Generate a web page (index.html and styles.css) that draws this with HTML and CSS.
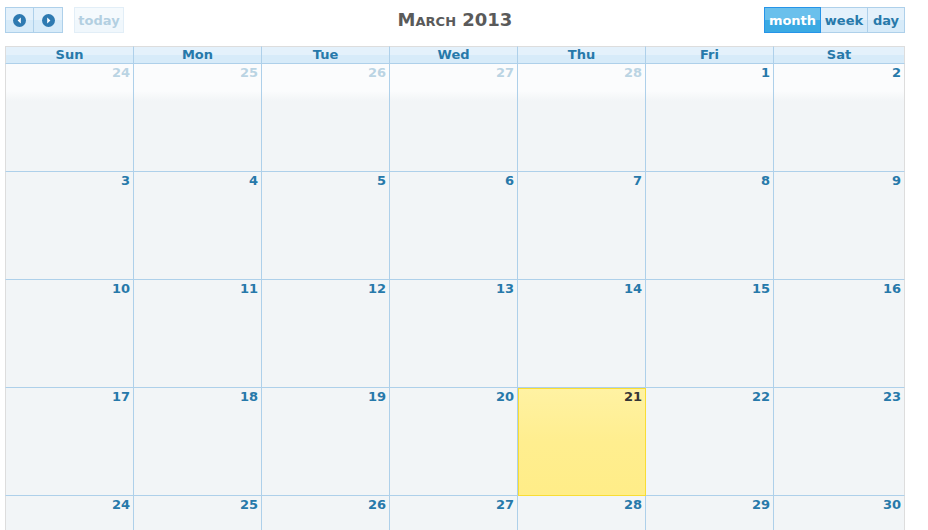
FILE: index.html
```html
<!DOCTYPE html>
<html>
<head>
<meta charset="utf-8">
<link rel="stylesheet" href="styles.css">
</head>
<body>
<div class="cal">
  <div class="toolbar">
    <div class="left">
      <div class="group">
        <span class="btn icon-btn first"><svg width="13" height="13" viewBox="0 0 13 13"><circle cx="6.5" cy="6.5" r="6.5" fill="#2e7ab1"/><path d="M7.8 3.6 L4.6 6.5 L7.8 9.4 Z" fill="#fff"/></svg></span><span class="btn icon-btn last"><svg width="13" height="13" viewBox="0 0 13 13"><circle cx="6.5" cy="6.5" r="6.5" fill="#2e7ab1"/><path d="M5.2 3.6 L8.4 6.5 L5.2 9.4 Z" fill="#fff"/></svg></span>
      </div>
      <span class="btn disabled">today</span>
    </div>
    <h2 class="title">March 2013</h2>
    <div class="right">
      <div class="group">
        <span class="btn active first">month</span><span class="btn">week</span><span class="btn last">day</span>
      </div>
    </div>
  </div>
  <div class="head">
    <div class="th">Sun</div><div class="th">Mon</div><div class="th">Tue</div><div class="th">Wed</div><div class="th">Thu</div><div class="th">Fri</div><div class="th">Sat</div>
  </div>
  <div class="body">
    <div class="cell other"><span class="num">24</span></div>
    <div class="cell other"><span class="num">25</span></div>
    <div class="cell other"><span class="num">26</span></div>
    <div class="cell other"><span class="num">27</span></div>
    <div class="cell other"><span class="num">28</span></div>
    <div class="cell"><span class="num">1</span></div>
    <div class="cell"><span class="num">2</span></div>

    <div class="cell"><span class="num">3</span></div>
    <div class="cell"><span class="num">4</span></div>
    <div class="cell"><span class="num">5</span></div>
    <div class="cell"><span class="num">6</span></div>
    <div class="cell"><span class="num">7</span></div>
    <div class="cell"><span class="num">8</span></div>
    <div class="cell"><span class="num">9</span></div>

    <div class="cell"><span class="num">10</span></div>
    <div class="cell"><span class="num">11</span></div>
    <div class="cell"><span class="num">12</span></div>
    <div class="cell"><span class="num">13</span></div>
    <div class="cell"><span class="num">14</span></div>
    <div class="cell"><span class="num">15</span></div>
    <div class="cell"><span class="num">16</span></div>

    <div class="cell"><span class="num">17</span></div>
    <div class="cell"><span class="num">18</span></div>
    <div class="cell"><span class="num">19</span></div>
    <div class="cell"><span class="num">20</span></div>
    <div class="cell today"><span class="num">21</span></div>
    <div class="cell"><span class="num">22</span></div>
    <div class="cell"><span class="num">23</span></div>

    <div class="cell"><span class="num">24</span></div>
    <div class="cell"><span class="num">25</span></div>
    <div class="cell"><span class="num">26</span></div>
    <div class="cell"><span class="num">27</span></div>
    <div class="cell"><span class="num">28</span></div>
    <div class="cell"><span class="num">29</span></div>
    <div class="cell"><span class="num">30</span></div>
  </div>
</div>
</body>
</html>
```
FILE: styles.css
```css
html, body {
  margin: 0;
  padding: 0;
  background: #ffffff;
}
body {
  font-family: "DejaVu Sans", "Liberation Sans", sans-serif;
  font-size: 13px;
}
.cal {
  width: 900px;
  padding: 7px 0 0 5px;
}
.toolbar {
  display: flex;
  align-items: flex-start;
  justify-content: space-between;
  height: 39px;
}
.left, .right {
  display: flex;
  gap: 11px;
  width: 200px;
}
.right {
  justify-content: flex-end;
}
.group {
  display: flex;
}
.btn {
  box-sizing: border-box;
  height: 26px;
  display: inline-flex;
  align-items: center;
  justify-content: center;
  padding: 0 6px;
  border: 1px solid #aed0ea;
  background: linear-gradient(#e4f1fb 0, #e4f1fb 50%, #d7ebf9 50%, #d7ebf9 100%);
  color: #2779aa;
  font-weight: bold;
  font-size: 13px;
}
.group .btn + .btn {
  border-left: none;
}
.icon-btn {
  width: 29px;
  padding: 0;
}
.group .icon-btn.last {
  width: 29px;
}
.btn.disabled {
  opacity: 0.35;
  width: 50px;
  padding: 0;
}
.btn.active {
  background: linear-gradient(#6ac0ec 0, #6ac0ec 50%, #3baae3 50%, #3baae3 100%);
  border-color: #2694e8;
  color: #ffffff;
  width: 57px;
  padding: 0;
}
.group .btn:nth-child(2):not(.icon-btn) {
  width: 47px;
  padding: 0;
}
.group .btn.last:not(.icon-btn) {
  width: 37px;
  padding: 0;
}
.title {
  margin: 0;
  padding-top: 1px;
  font-size: 18px;
  font-weight: bold;
  font-variant: small-caps;
  color: #5a5a5a;
  line-height: 24px;
}
.head, .body {
  display: grid;
  grid-template-columns: 129px repeat(5, 128px) 131px;
  width: 900px;
}
.th {
  box-sizing: border-box;
  height: 18px;
  border-top: 1px solid #dddddd;
  border-right: 1px solid #aed0ea;
  border-bottom: 1px solid #aed0ea;
  background: linear-gradient(#e4f1fb 0, #e4f1fb 50%, #d7ebf9 50%, #d7ebf9 100%);
  color: #2779aa;
  font-weight: bold;
  font-size: 13px;
  line-height: 16px;
  text-align: center;
}
.th:first-child {
  border-left: 1px solid #dddddd;
}
.th:last-child {
  border-right-color: #dddddd;
}
.body {
  background: linear-gradient(#fbfcfd 0, #fbfcfd 27px, #f2f5f7 37px, #f2f5f7 100%);
}
.cell {
  box-sizing: border-box;
  height: 108px;
  border-right: 1px solid #aed0ea;
  border-bottom: 1px solid #aed0ea;
  padding: 1px 3px 0 0;
  text-align: right;
}
.cell:nth-child(7n+1) {
  border-left: 1px solid #dddddd;
}
.cell:nth-child(7n) {
  border-right-color: #dddddd;
}
.num {
  display: block;
  color: #2779aa;
  font-weight: bold;
  font-size: 13px;
  line-height: 15px;
}
.other .num {
  opacity: 0.3;
}
.cell.today {
  background: linear-gradient(#fff2a3 0, #ffee8f 50%, #ffed88 100%);
  outline: 1px solid #f9dd34;
  outline-offset: -1px;
  border-right-color: #aed0ea;
}
.today .num {
  color: #363636;
}
```
